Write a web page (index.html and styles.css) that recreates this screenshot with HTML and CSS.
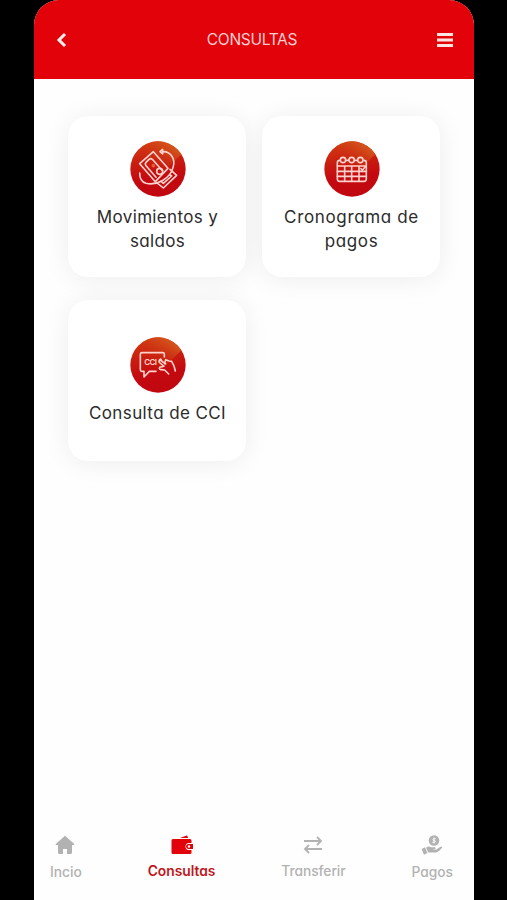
FILE: index.html
```html
<!DOCTYPE html>
<html lang="es">
<head>
<meta charset="utf-8">
<title>Consultas</title>
<link rel="stylesheet" href="styles.css">
</head>
<body>
<svg class="defs" width="0" height="0" aria-hidden="true">
  <defs>
    <linearGradient id="base" x1="0.35" y1="0" x2="0.5" y2="1">
      <stop offset="0" stop-color="#d43a10"/>
      <stop offset="0.38" stop-color="#c81c10"/>
      <stop offset="0.65" stop-color="#c40a10"/>
      <stop offset="1" stop-color="#c0060f"/>
    </linearGradient>
    <linearGradient id="shine" x1="0.75" y1="0.1" x2="0.2" y2="0.8">
      <stop offset="0" stop-color="#d4561c"/>
      <stop offset="1" stop-color="#c8200f" stop-opacity="0"/>
    </linearGradient>
  </defs>
</svg>
<div class="phone">
  <header class="header">
    <svg class="back" viewBox="0 0 12 16"><path d="M10 2 4 8l6 6"/></svg>
    <h1 class="title">CONSULTAS</h1>
    <svg class="menu" viewBox="0 0 16 14"><path d="M0 1.600h16M0 7h16M0 12.400h16"/></svg>
  </header>

  <main class="grid">
    <a class="card">
      <svg class="icon" viewBox="28 30 168 168">
        <circle cx="112" cy="114" r="83" fill="url(#base)"/>
        <path d="M64 46A83 83 0 0 1 182 70L112 138Z" fill="url(#shine)"/>
        <g class="line">
          <path d="M98 62 142 112 104 152 57 98Z"/>
          <path d="M106 139 75 103q-3-5 1-9l9-9q5-4 10 0l31 35"/>
          <circle class="dot" cx="98" cy="104" r="3"/>
          <circle cx="117" cy="121" r="9"/>
          <path d="m148 115 20 18-40 38-20-16M147 131l6 4-25 22-7-6"/>
          <path d="M125 62c24-2 41 21 32 48-8 32-48 55-81 47-14-4-19-14-19-31"/>
          <path d="m126 55-8 7 8 7Z"/>
        </g>
      </svg>
      <span class="label label-mov">Movimientos y<br>saldos</span>
    </a>
    <a class="card">
      <svg class="icon" viewBox="32 30 168 168">
        <circle cx="116" cy="114" r="83" fill="url(#base)"/>
        <path d="M68 46A83 83 0 0 1 186 70L116 138Z" fill="url(#shine)"/>
        <g class="line">
          <path d="M79 88q-7 0-7 7v49q0 7 7 7h73q7 0 7-7V95q0-7-7-7M97 88h9M123 88h9"/>
          <circle cx="89" cy="87" r="8"/><circle cx="115" cy="87" r="8"/><circle cx="141" cy="87" r="8"/>
          <path d="M72 105h87M72 121h87M72 136h87M94 105v46M115 105v46M137 105v46"/>
          <path d="m143 113 4 5 9-11"/>
        </g>
      </svg>
      <span class="label label-cro">Cronograma de<br>pagos</span>
    </a>
    <a class="card">
      <svg class="icon" viewBox="28 30 168 168">
        <circle cx="112" cy="114" r="83" fill="url(#base)"/>
        <path d="M64 46A83 83 0 0 1 182 70L112 138Z" fill="url(#shine)"/>
        <g class="line">
          <path d="M131 90v-8q0-5-5-5H64q-5 0-5 5v46q0 5 5 5h6v17l16-17h20"/>
          <path d="m135 111-18-13q-4 6 1 10l12 10-13 3q-3 5 3 7l12 1 12 12M124 103l-4-7M132 110l3-12 10 4 8 1q8 12 11 29"/>
        </g>
        <text class="cci" x="71" y="115">CCI</text>
      </svg>
      <span class="label label-cci">Consulta de CCI</span>
    </a>
  </main>

  <nav class="nav">
    <a class="tab tab-home">
      <svg viewBox="0 0 20 20"><path class="solid" d="M10 .8 19.300 9q.4 1-.7 1H17v7.500q0 1.500-1.500 1.500H12v-5H8v5H4.500Q3 19 3 17.500V10H1.400Q.3 10 .7 9Z"/></svg>
      <span>Incio</span>
    </a>
    <a class="tab tab-active">
      <svg viewBox="0 0 22 20"><path class="solid" d="M2 4h17q1.500 0 1.500 1.500V8h-2.500a3.500 3.500 0 0 0 0 7h2.500v2.500q0 1.500-1.500 1.500H2Q.5 19 .5 17.500v-12Q.5 4 2 4ZM9 3l6-2.300q1.200-.4 1.600.8l.4 1.500Z"/><path class="solid" d="M17.500 9H22v5h-4.500a2.500 2.500 0 0 1 0-5Z"/><circle cx="18" cy="11.500" r="1.200" fill="#fff"/></svg>
      <span>Consultas</span>
    </a>
    <a class="tab tab-transfer">
      <svg viewBox="0 0 20 20"><path class="arrow" d="M1 6h17M14 2l4 4-4 4M19 14H2M6 10l-4 4 4 4"/></svg>
      <span>Transferir</span>
    </a>
    <a class="tab tab-pay">
      <svg viewBox="0 0 22 20"><circle class="solid" cx="13" cy="5.500" r="5.300"/><path d="M14.800 3.700h-2.300q-1 .9 0 1.800h1.300q1 .9 0 1.800h-2.500M13 2.500v6" stroke="#fff" stroke-width=".9" fill="none"/><path class="solid" d="m.6 14 3.400-1.700L6.400 18 3 19.800ZM5 12.800q2.500-2 5-.6h4q1.400 1 .1 2l-3.400.4 4.300.2 4.500-3q1.700-.5 1.800.8-3.800 4.700-6.300 4.900H7.300Z"/></svg>
      <span>Pagos</span>
    </a>
  </nav>
</div>
</body>
</html>
```
FILE: styles.css
```css
* { box-sizing: border-box; }

body {
  margin: 0;
  background: #000;
  font-family: Inter, "Liberation Sans", sans-serif;
  font-feature-settings: "cv11" 1;
}

.defs { display: block; }

.phone {
  display: flex;
  flex-direction: column;
  width: 440px;
  height: 900px;
  margin-left: 34px;
  background: #fefefe;
  border-radius: 25px 25px 0 0;
  overflow: hidden;
}

.header {
  display: flex;
  align-items: center;
  justify-content: space-between;
  height: 79px;
  padding: 0 21px;
  background: #e1020a;
}

.title {
  margin: 0;
  font-size: 15.500px;
  font-weight: 400;
  letter-spacing: -0.280px;
  color: #ffd0d0;
}

.back { width: 12px; height: 16px; }
.back path { fill: none; stroke: #fff0ef; stroke-width: 3; }
.menu { width: 16px; height: 14px; }
.menu path { stroke: #ffe4e4; stroke-width: 3; }

.grid {
  display: grid;
  grid-template-columns: 178px 178px;
  grid-auto-rows: 161px;
  gap: 23px 16px;
  padding: 37px 34px;
}

.card {
  display: flex;
  flex-direction: column;
  align-items: center;
  justify-content: center;
  padding-left: 1px;
  background: #fff;
  border-radius: 20px;
  box-shadow: 0 2px 26px rgba(0, 0, 0, 0.070);
}

.icon { width: 56px; height: 56px; }
.line { fill: none; stroke: #ffd3cb; stroke-width: 4.800; stroke-linejoin: round; stroke-linecap: round; }
.dot { stroke: #ee5a36; }
.cci { font-size: 24px; font-weight: 600; letter-spacing: -2px; fill: #ffd3cb; }

.label {
  margin-top: 8px;
  font-size: 17px;
  line-height: 24px;
  text-align: center;
  color: #2b2b2b;
}
.label-mov { letter-spacing: 0.350px; }
.label-cro { letter-spacing: 0.650px; }
.label-cci { letter-spacing: 0.400px; }

.nav {
  display: flex;
  justify-content: space-between;
  margin-top: auto;
  padding: 0 21px 18px 16px;
}

.tab {
  display: flex;
  flex-direction: column;
  align-items: center;
  gap: 7px;
  font-size: 13.800px;
  line-height: 20px;
  font-weight: 500;
  color: #b2b2b2;
}
.tab svg { height: 20px; }
.solid { fill: currentColor; }
.arrow { fill: none; stroke: currentColor; stroke-width: 1.800; }
.tab-home svg { margin-left: -1px; }
.tab-transfer { letter-spacing: -0.050px; }
.tab-active { color: #e1020a; font-weight: 600; }
.tab-active span { color: #bd1620; }
.tab-transfer span, .tab-active span { margin-top: -1px; }
```
